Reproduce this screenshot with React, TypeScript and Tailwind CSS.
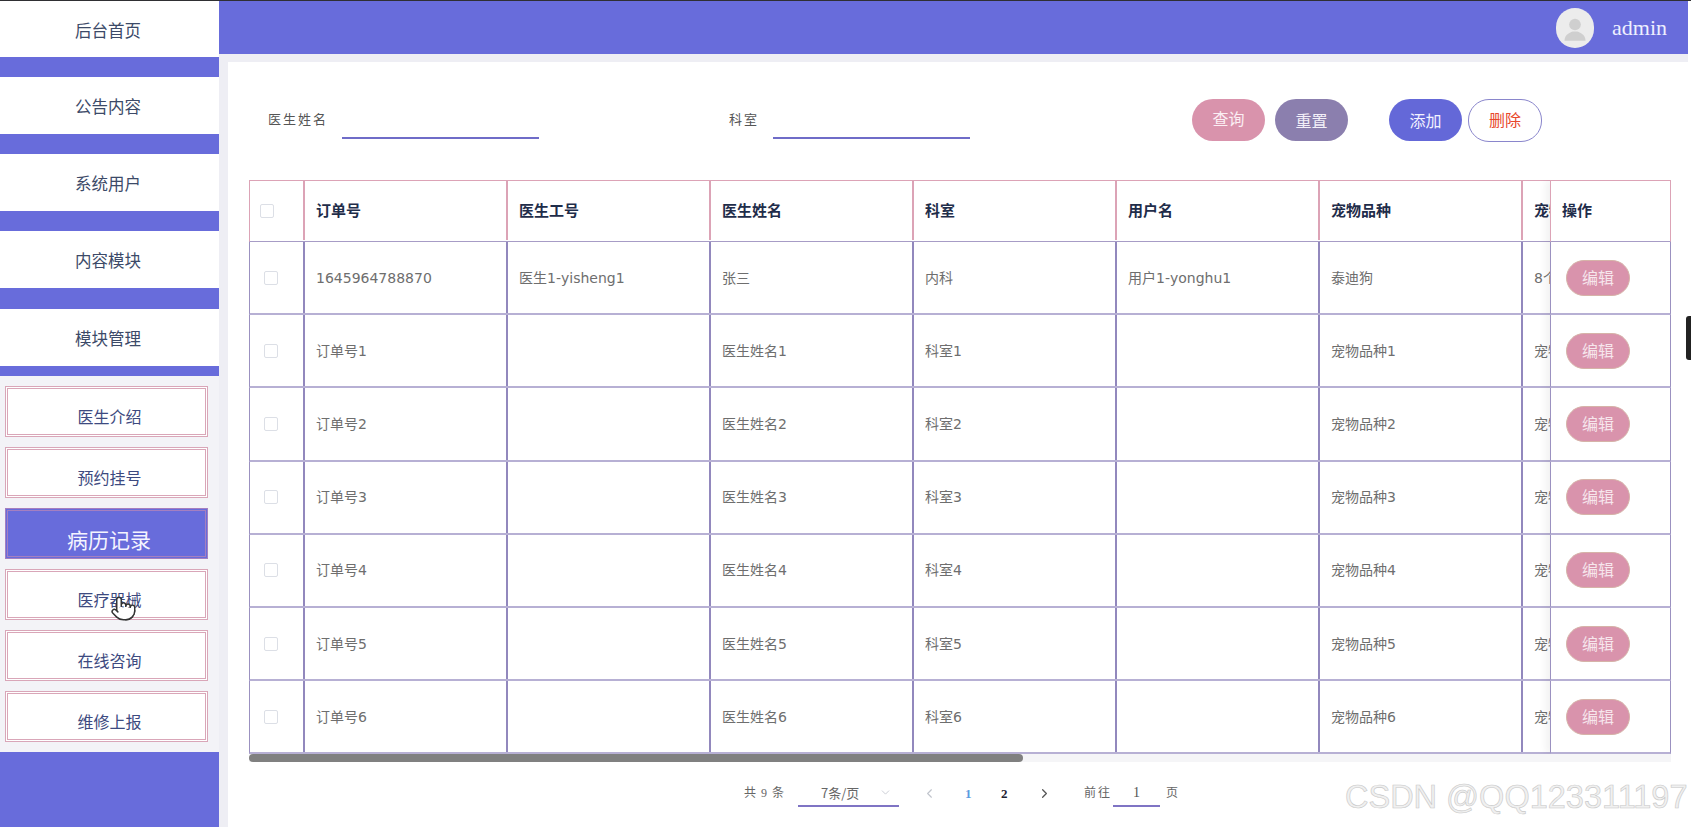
import React from "react";
import { Pointer, ChevronLeft, ChevronRight, ChevronDown } from "lucide-react";

const cjk = "font-['Microsoft_YaHei','Noto_Sans_CJK_SC',sans-serif]";

const topNav = ["后台首页", "公告内容", "系统用户", "内容模块", "模块管理"];
const subNav = ["医生介绍", "预约挂号", "病历记录", "医疗器械", "在线咨询", "维修上报"];

const columns = ["订单号", "医生工号", "医生姓名", "科室", "用户名", "宠物品种", "宠物年龄"];

const rows = [
  ["1645964788870", "医生1-yisheng1", "张三", "内科", "用户1-yonghu1", "泰迪狗", "8个月"],
  ["订单号1", "", "医生姓名1", "科室1", "", "宠物品种1", "宠物年龄1"],
  ["订单号2", "", "医生姓名2", "科室2", "", "宠物品种2", "宠物年龄2"],
  ["订单号3", "", "医生姓名3", "科室3", "", "宠物品种3", "宠物年龄3"],
  ["订单号4", "", "医生姓名4", "科室4", "", "宠物品种4", "宠物年龄4"],
  ["订单号5", "", "医生姓名5", "科室5", "", "宠物品种5", "宠物年龄5"],
  ["订单号6", "", "医生姓名6", "科室6", "", "宠物品种6", "宠物年龄6"],
];

function Sidebar() {
  return (
    <aside className="flex h-full w-[219px] shrink-0 flex-col bg-[#686cdb]">
      {topNav.map((label, i) => (
        <div key={label}>
          <div
            className={`flex items-center justify-center bg-white pr-[3px] pt-[2px] text-[16.5px] text-[#3c4a68] ${i === 0 ? "h-[56px]" : "h-[57px]"}`}
          >
            {label}
          </div>
          <div className={i === 4 ? "h-[10px]" : i === 3 ? "h-[21px]" : "h-5"} />
        </div>
      ))}
      <div className="flex h-[376px] flex-col gap-[10px] bg-[#f3f3f7] pl-[5px] pt-[10px]">
        {subNav.map((label) => {
          const active = label === "病历记录";
          return (
            <div
              key={label}
              className={
                active
                  ? "flex h-[51px] w-[203px] items-end justify-center border-[3px] border-double border-[#a57fc0] bg-[#686cdb] pb-[1px] pl-[5px] text-[21px] text-[#f4f4ff]"
                  : "flex h-[51px] w-[203px] items-end justify-center border-[3px] border-double border-[#d9a6b8] bg-white pb-[6px] pl-[6px] text-[16px] text-[#3d4a80]"
              }
            >
              {label}
            </div>
          );
        })}
      </div>
    </aside>
  );
}

function Checkbox({ className }: { className: string }) {
  return <span className={`block h-[14px] w-[14px] rounded-[2px] border border-[#dcdfe6] bg-white ${className}`} />;
}

function DataTable() {
  return (
    <div className="relative w-[1422px] overflow-hidden">
      <div className="w-[1700px]">
        <div className="flex h-[62px] border-y border-l border-y-[#dca3b6] border-l-[#dca3b6] border-b-[#a79cc6] pb-[1px] text-[15px] font-bold text-[#1f2d4a]">
          <div className="flex w-[55px] shrink-0 items-center border-r-2 border-[#dca3b6]">
            <Checkbox className="ml-[10px]" />
          </div>
          {columns.map((col) => (
            <div key={col} className="flex w-[203px] shrink-0 items-center border-r-2 border-[#dca3b6] pl-[11px]">
              {col}
            </div>
          ))}
        </div>
        {rows.map((row, i) => (
          <div
            key={i}
            className="flex h-[73.2px] border-b-2 border-l border-b-[#b7b0d4] border-l-[#9b91c0] font-['DejaVu_Sans','Noto_Sans_CJK_SC',sans-serif] text-[14px] text-[#6e6e6e]"
          >
            <div className="flex w-[55px] shrink-0 items-center border-r-2 border-[#9288bd]">
              <Checkbox className="ml-[14px]" />
            </div>
            {row.map((cell, j) => (
              <div key={j} className="flex w-[203px] shrink-0 items-center border-r-2 border-[#9288bd] pl-[11px] pt-[1px]">
                {cell}
              </div>
            ))}
          </div>
        ))}
      </div>

      {/* fixed action column */}
      <div className="absolute right-0 top-0 w-[121px] bg-white shadow-[-4px_0_8px_rgba(0,0,0,0.06)]">
        <div className="flex h-[62px] items-center border border-[#dca3b6] border-b-[#a79cc6] pb-[1px] pl-[11px] text-[15px] font-bold text-[#1f2d4a]">
          操作
        </div>
        {rows.map((_, i) => (
          <div key={i} className="flex h-[73.2px] items-center border-x border-b-2 border-x-[#9b91c0] border-b-[#b7b0d4] pl-[15px]">
            <button className="h-9 w-16 rounded-[18px] border border-[#d6b3a8] bg-[#d993ac] pb-[2px] text-[16px] text-[#f6e6ec]">
              编辑
            </button>
          </div>
        ))}
      </div>
    </div>
  );
}

function Pagination() {
  return (
    <div className="ml-[495px] mt-[17px] flex items-center font-['Liberation_Serif','Noto_Sans_CJK_SC',serif] text-[12px] text-[#666]">
      <span className="w-[54px] tracking-[1px]">共 9 条</span>
      <div className="flex h-[28px] w-[101px] items-center border-b-2 border-[#7f74c4] pl-[23px] font-['Noto_Sans_CJK_SC',sans-serif] text-[13px]">
        <span className="w-[58px]">7条/页</span>
        <ChevronDown size={13} strokeWidth={1.5} className="text-[#c0c4cc]" />
      </div>
      <ChevronLeft size={15} strokeWidth={1.8} className="ml-[23px] text-[#c0c4cc]" />
      <span className="ml-[28px] w-[8px] text-[13px] font-bold text-[#5b9bdf]">1</span>
      <span className="ml-[28px] w-[8px] text-[13px] font-bold text-[#1f2233]">2</span>
      <ChevronRight size={15} strokeWidth={2} className="ml-[28px] text-[#555]" />
      <span className="ml-[32px] w-[29px] tracking-[2px]">前往</span>
      <span className="flex h-[28px] w-[47px] items-center justify-center border-b-2 border-[#7f74c4] text-[14px] text-[#555]">
        1
      </span>
      <span className="ml-[6px]">页</span>
    </div>
  );
}

export default function App() {
  return (
    <div className={`relative flex h-[827px] w-[1691px] overflow-hidden border-t border-[#2f2f33] bg-white ${cjk}`}>
      <Sidebar />
      <main className="flex h-full w-[1469px] flex-col bg-[#eeeef4]">
        <header className="flex h-[53px] items-center justify-end bg-[#686cdb] pr-[21px]">
          <div className="mr-[18px] flex h-10 w-[38px] items-center justify-center overflow-hidden rounded-full bg-[#ececec]">
            <svg viewBox="0 0 24 24" className="h-7 w-7 fill-[#cfcfcf]">
              <circle cx="12" cy="9" r="5" />
              <path d="M3 23c0-5 4-7 7-8h4c3 1 7 3 7 8z" />
            </svg>
          </div>
          <span className="font-['Liberation_Serif',serif] text-[22px] text-[#eef0ff]">admin</span>
        </header>
        <section className="ml-[9px] mt-[8px] flex-1 bg-white pl-[21px]">
          <div className="flex h-[118px] items-center">
            <label className="ml-[19px] w-[74px] pb-[2px] font-['Liberation_Serif','Noto_Sans_CJK_SC',serif] text-[13px] tracking-[2px] text-[#555]">
              医生姓名
            </label>
            <div className="h-9 w-[197px] border-b-2 border-[#6f6cc8]" />
            <label className="ml-[190px] w-[44px] pb-[2px] font-['Liberation_Serif','Noto_Sans_CJK_SC',serif] text-[13px] tracking-[2px] text-[#555]">
              科室
            </label>
            <div className="h-9 w-[197px] border-b-2 border-[#6f6cc8]" />
            <button className="mb-[2px] ml-[222px] h-[42px] w-[73px] rounded-[21px] bg-[#d993ac] pb-[5px] text-[16px] text-[#fbeef3]">
              查询
            </button>
            <button className="mb-[2px] ml-[10px] h-[42px] w-[73px] rounded-[21px] bg-[#8b7fae] pb-[1px] text-[16px] text-[#f2eff8]">
              重置
            </button>
            <button className="mb-[2px] ml-[41px] h-[42px] w-[73px] rounded-[21px] bg-[#6468d8] pb-[1px] text-[16px] text-[#f2f2ff]">
              添加
            </button>
            <button className="mb-[2px] ml-[6px] h-[43px] w-[74px] rounded-[21px] border border-[#8a86cc] bg-white pb-[2px] text-[16px] text-[#e8482c]">
              删除
            </button>
          </div>
          <DataTable />
          <div className="h-2 w-[1422px] bg-[#f5f5f7]">
            <div className="h-2 w-[774px] rounded-[4px] bg-[#808080]" />
          </div>
          <Pagination />
        </section>
      </main>
      <div className="w-[3px] shrink-0 bg-white" />

      {/* video watermark + mouse cursor captured in the screenshot */}
      <span className="pointer-events-none absolute left-[1345px] top-[777px] font-['Liberation_Sans',sans-serif] text-[32.5px] leading-[38px] text-[#f0f0f0] [-webkit-text-stroke:0.6px_#c8c8c8]">
        CSDN @QQ123311197
      </span>
      <Pointer size={27} strokeWidth={1.3} className="pointer-events-none absolute left-[110px] top-[594px] fill-white text-[#333]" />
      <span className="absolute right-0 top-[315px] h-[44px] w-[5px] rounded-l-[3px] bg-[#222]" />
    </div>
  );
}
